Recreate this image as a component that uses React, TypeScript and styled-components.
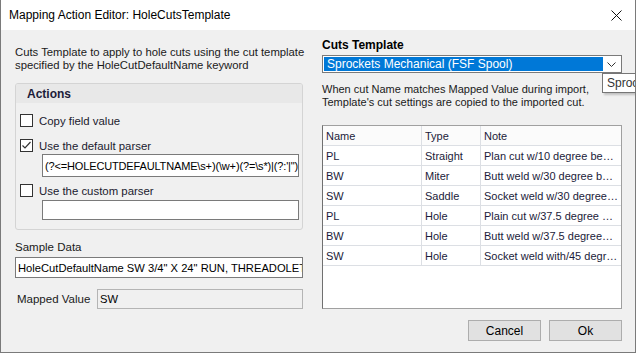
import React from "react";
import styled, { createGlobalStyle } from "styled-components";

const Global = createGlobalStyle`
  html, body { margin: 0; padding: 0; background: #f0f0f0; }
  body { font-family: "Liberation Sans", Arial, sans-serif; }
`;

const Window = styled.div`
  position: relative;
  width: 636px;
  height: 353px;
  box-sizing: border-box;
  border: 1px solid #7a7a7a;
  border-top: none;
  background: #f0f0f0;
  display: flex;
  flex-direction: column;
  overflow: hidden;
  color: #1a1a1a;
  font-size: 11px;
`;

const TitleBar = styled.div`
  height: 30px;
  flex: 0 0 30px;
  background: #fff;
  display: flex;
  align-items: center;
  justify-content: space-between;
  padding: 0 8px 0 8px;
  font-size: 12px;
  color: #000;
`;

const CloseBtn = styled.div`
  width: 14px;
  height: 14px;
  margin-right: 4px;
  display: flex;
  align-items: center;
  justify-content: center;
`;

const Body = styled.div`
  flex: 1;
  display: grid;
  grid-template-columns: 288px 300px;
  column-gap: 19px;
  padding: 8px 14px 12px 14px;
`;

const Column = styled.div`
  display: flex;
  flex-direction: column;
`;

const Para = styled.p<{ $mt?: number; $fs?: number }>`
  margin: ${(p) => p.$mt || 0}px 0 0 0;
  line-height: 13px;
  font-size: ${(p) => p.$fs || 11}px;
  white-space: nowrap;
`;

const Group = styled.div`
  margin-top: 11px;
  border: 1px solid #d4d4d4;
  border-radius: 3px;
  height: 147px;
  box-sizing: border-box;
  display: flex;
  flex-direction: column;
`;

const GroupHeader = styled.div`
  height: 19px;
  background: #e8e8e8;
  font-weight: bold;
  font-size: 12px;
  color: #1c1c3a;
  display: flex;
  align-items: center;
  padding-left: 11px;
  border-radius: 2px 2px 0 0;
`;

const GroupBody = styled.div`
  padding: 11px 3px 0 4px;
  display: flex;
  flex-direction: column;
`;

const CheckRow = styled.label<{ $mt?: number }>`
  display: flex;
  align-items: center;
  gap: 6px;
  height: 13px;
  margin-top: ${(p) => p.$mt || 0}px;
  color: #1a1a2e;
  font-size: 11.4px;
`;

const Box = styled.span`
  width: 13px;
  height: 13px;
  box-sizing: border-box;
  border: 1px solid #333;
  background: #fff;
  display: flex;
  align-items: center;
  justify-content: center;
`;

const Input = styled.div<{ $h?: number; $ml?: number; $mt?: number; $disabled?: boolean; $grow?: boolean; $narrow?: boolean }>`
  box-sizing: border-box;
  height: ${(p) => p.$h || 20}px;
  margin-left: ${(p) => p.$ml || 0}px;
  margin-top: ${(p) => p.$mt || 0}px;
  border: 1px solid ${(p) => (p.$disabled ? "#b4b4b4" : "#7a7a7a")};
  background: ${(p) => (p.$disabled ? "#f0f0f0" : "#fff")};
  display: flex;
  align-items: center;
  padding-left: 2px;
  white-space: nowrap;
  overflow: hidden;
  font-size: ${(p) => (p.$narrow ? 11 : 11.2)}px;
  letter-spacing: ${(p) => (p.$narrow ? -0.15 : 0)}px;
  color: #000;
  flex: ${(p) => (p.$grow ? 1 : "none")};
`;

const Label = styled.div<{ $mt?: number; $pl?: number; $w?: number }>`
  margin-top: ${(p) => p.$mt || 0}px;
  padding-left: ${(p) => p.$pl || 0}px;
  width: ${(p) => (p.$w ? `${p.$w}px` : "auto")};
  box-sizing: border-box;
  font-size: 11.5px;
  line-height: 14px;
`;

const MappedRow = styled.div`
  display: flex;
  align-items: center;
  margin-top: 11px;
`;

const Heading = styled.div`
  font-weight: bold;
  font-size: 12px;
  color: #000;
  line-height: 14px;
`;

const Combo = styled.div`
  margin-top: 3px;
  height: 18px;
  box-sizing: border-box;
  border: 1px solid #7a7a7a;
  background: #fff;
  display: flex;
  align-items: center;
  padding: 1px;
`;

const ComboValue = styled.div`
  flex: 1;
  height: 100%;
  background: #0078d7;
  color: #fff;
  font-size: 12px;
  display: flex;
  align-items: center;
  padding-left: 3px;
`;

const ComboArrow = styled.div`
  width: 17px;
  display: flex;
  align-items: center;
  justify-content: center;
`;

const Table = styled.div`
  margin-top: 16px;
  height: 184px;
  box-sizing: border-box;
  border: 1px solid #a0a0a0;
  border-left-color: #707070;
  background: #fff;
  font-family: "Liberation Sans", Tahoma, sans-serif;
  font-size: 11px;
  color: #1b1b3a;
`;

const TRow = styled.div<{ $head?: boolean }>`
  display: grid;
  grid-template-columns: 99px 59px 1fr;
  height: 20px;
  box-sizing: border-box;
  border-bottom: 1px solid #dcdfe4;
  background: ${(p) => (p.$head ? "#fbfbfb" : "#fff")};
`;

const TCell = styled.div`
  display: flex;
  align-items: center;
  padding-left: 3px;
  white-space: nowrap;
  overflow: hidden;
  border-right: 1px solid #dcdfe4;
  &:last-child { border-right: none; }
`;

const Buttons = styled.div`
  margin-top: 11px;
  display: flex;
  justify-content: flex-end;
  gap: 8px;
`;

const Button = styled.button`
  width: 73px;
  height: 21px;
  border: 1px solid #adadad;
  background: #e1e1e1;
  font-family: "Liberation Sans", Arial, sans-serif;
  font-size: 12px;
  color: #000;
  padding: 0;
`;

const Tooltip = styled.div`
  position: absolute;
  left: 601px;
  top: 73px;
  height: 18px;
  padding: 0 4px;
  background: #fff;
  border: 1px solid #767676;
  box-shadow: 2px 2px 2px rgba(0,0,0,0.2);
  font-size: 12px;
  display: flex;
  align-items: center;
  white-space: nowrap;
  color: #333;
`;

const Check = ({ checked }: { checked?: boolean }) => (
  <Box>
    {checked && (
      <svg width="11" height="11" viewBox="0 0 11 11">
        <path d="M1.5 5.5 L4 8 L9.5 2" stroke="#333" strokeWidth="1.2" fill="none" />
      </svg>
    )}
  </Box>
);

const rows = [
  ["PL", "Straight", "Plan cut w/10 degree be…"],
  ["BW", "Miter", "Butt weld w/30 degree b…"],
  ["SW", "Saddle", "Socket weld w/30 degree…"],
  ["PL", "Hole", "Plain cut w/37.5 degree …"],
  ["BW", "Hole", "Butt weld w/37.5 degree…"],
  ["SW", "Hole", "Socket weld with/45 degr…"],
];

export default function App() {
  return (
    <Window>
      <Global />
      <TitleBar>
        <span>Mapping Action Editor: HoleCutsTemplate</span>
        <CloseBtn>
          <svg width="11" height="11" viewBox="0 0 11 11">
            <path d="M0.5 0.5 L10.5 10.5 M10.5 0.5 L0.5 10.5" stroke="#111" strokeWidth="1" />
          </svg>
        </CloseBtn>
      </TitleBar>
      <Body>
        <Column>
          <Para $mt={8} $fs={11.3}>
            Cuts Template to apply to hole cuts using the cut template
            <br />
            specified by the HoleCutDefaultName keyword
          </Para>
          <Group>
            <GroupHeader>Actions</GroupHeader>
            <GroupBody>
              <CheckRow>
                <Check />
                <span>Copy field value</span>
              </CheckRow>
              <CheckRow $mt={12}>
                <Check checked />
                <span>Use the default parser</span>
              </CheckRow>
              <Input $ml={22} $mt={2} $h={23} $narrow>
                {"(?<=HOLECUTDEFAULTNAME\\s+)(\\w+)(?=\\s*)|(?:'|\")"}
              </Input>
              <CheckRow $mt={7}>
                <Check />
                <span>Use the custom parser</span>
              </CheckRow>
              <Input $ml={22} $mt={3} $h={20} />
            </GroupBody>
          </Group>
          <Label $mt={10}>Sample Data</Label>
          <Input $mt={3} $h={21}>
            HoleCutDefaultName SW 3/4" X 24" RUN, THREADOLET, 3000#
          </Input>
          <MappedRow>
            <Label $pl={2} $w={82}>Mapped Value</Label>
            <Input $grow $disabled $h={20}>SW</Input>
          </MappedRow>
        </Column>
        <Column>
          <Heading>Cuts Template</Heading>
          <Combo>
            <ComboValue>Sprockets Mechanical (FSF Spool)</ComboValue>
            <ComboArrow>
              <svg width="9" height="5" viewBox="0 0 9 5">
                <path d="M0.5 0.5 L4.5 4.5 L8.5 0.5" stroke="#333" strokeWidth="1" fill="none" />
              </svg>
            </ComboArrow>
          </Combo>
          <Para $mt={10}>
            When cut Name matches Mapped Value during import,
            <br />
            Template's cut settings are copied to the imported cut.
          </Para>
          <Table>
            <TRow $head>
              <TCell>Name</TCell>
              <TCell>Type</TCell>
              <TCell>Note</TCell>
            </TRow>
            {rows.map((r, i) => (
              <TRow key={i}>
                <TCell>{r[0]}</TCell>
                <TCell>{r[1]}</TCell>
                <TCell>{r[2]}</TCell>
              </TRow>
            ))}
          </Table>
          <Buttons>
            <Button>Cancel</Button>
            <Button>Ok</Button>
          </Buttons>
        </Column>
      </Body>
      <Tooltip>Sprockets Mechanical (FSF Spool)</Tooltip>
    </Window>
  );
}
